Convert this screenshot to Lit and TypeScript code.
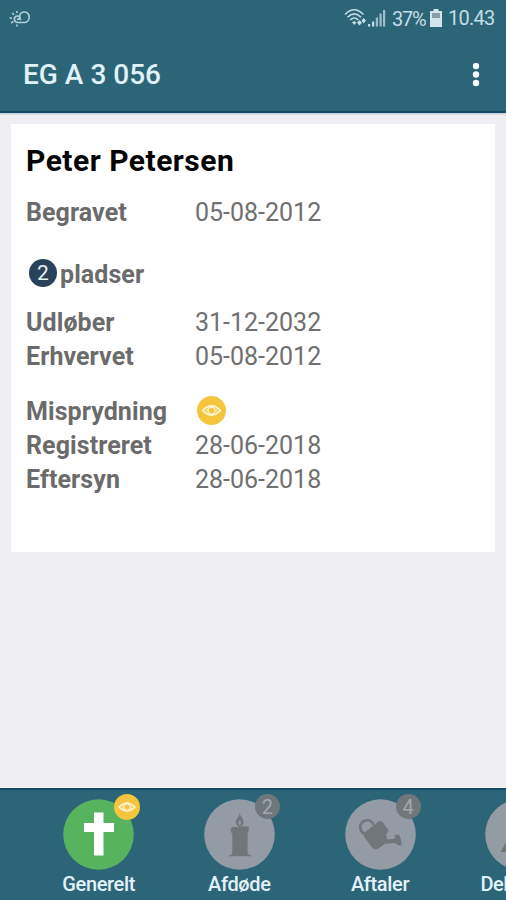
import { LitElement, html, css, svg, nothing } from "lit";
import { customElement, property } from "lit/decorators.js";

const eye = html`<svg class="eye" viewBox="0 0 28 28">
  <circle cx="14" cy="14" r="14" fill="#f5c63d" />
  <path d="M5.400 14Q14 5 22.600 14Q14 23 5.400 14Z" fill="none" stroke="#fff8df" stroke-width="1.500" />
  <circle cx="14" cy="14" r="3.400" fill="none" stroke="#fff8df" stroke-width="1.300" />
  <path d="M9.200 12.200Q7.800 14 9.200 15.800M18.800 12.200Q20.200 14 18.800 15.800" fill="none" stroke="#fff0bd" stroke-width="1" />
</svg>`;

const glyphs: Record<string, unknown> = {
  cross: svg`<path d="M31 13.500h9.500v10.500h10.500v9h-10.500v23.500h-9.500v-23.500h-10v-9h10z" fill="#fff"/>`,
  candle: svg`<path d="M35.600 14.200C36.500 17.500 39.500 19.500 39.500 23.200C39.500 25.400 38.300 27 36.600 27.500V29H35V27.500C33.200 27 31.800 25.300 31.800 23C31.800 19.500 35.400 18 35.600 14.200Z" fill="#6f777b"/>
    <path d="M35.700 20.500C37.600 23.400 36.900 26 35.700 26.600C34.300 25.700 34.200 23 35.700 20.500Z" fill="#939ba5"/>
    <path d="M27.300 28.600Q30.500 26.800 34.500 28.500Q39 26.600 44.500 27.800Q45.500 30.200 44.400 32.400L43.600 34.200V54.500Q44.500 55.800 48.200 57.300H24Q27.600 56 28.300 54.500V35Q25.800 32 27.300 28.600Z" fill="#6f777b"/>`,
  can: svg`<path d="M20 35.500C14 32 13.500 24 19.800 21.800C24 20.400 27.300 22.200 28.600 26" fill="none" stroke="#6f777b" stroke-width="2.700"/>
    <path d="M19.200 34L33.500 22.500Q36.500 21 38.500 24.500L43.700 31.500L41.200 35L42.200 40.500L48.500 40L50.500 38L48.700 36.600L54 35.200Q56.800 40.500 56.500 46.800L53 46.300L50 43.900L40.400 44.800L31.500 50.500Q29 51 26.700 48L19.500 38.500Q18.300 36 19.200 34Z" fill="#6f777b"/>`,
  more: svg`<path d="M15.500 53L24 38H45V53Z" fill="#6f777b"/>`,
};

@customElement("nav-item")
class NavItem extends LitElement {
  @property() label = "";
  @property() icon = "";
  @property() badge = "";
  @property({ type: Boolean, reflect: true }) active = false;

  static styles = css`
    :host { position: relative; flex: none; width: 140.700px; display: flex; flex-direction: column; align-items: center; }
    .disc { width: 71px; height: 71px; display: block; }
    .label { font: 500 20px/24px Roboto, sans-serif; color: #e3f2f8; letter-spacing: -0.350px; margin-top: 1.500px; white-space: nowrap; }
    :host(:last-child) .label { letter-spacing: -0.500px; margin-right: 9px; }
    .badge { position: absolute; left: 86px; top: -5px; width: 25px; height: 25px; border-radius: 50%; background: #6f777b; color: #a0a9b2; font: 20px/27px Roboto, sans-serif; text-align: center; }
    .alert { position: absolute; left: 86px; top: -5.500px; width: 26px; height: 26px; }
    .eye { display: block; width: 100%; height: 100%; }
  `;

  render() {
    return html`<svg class="disc" viewBox="0 0 71 71">
        <circle cx="35.500" cy="35.500" r="35.300" fill=${this.active ? "#57b35e" : "#939ba5"} />
        ${glyphs[this.icon]}
      </svg>
      <span class="label">${this.label}</span>
      ${this.active ? html`<div class="alert">${eye}</div>` : this.badge ? html`<div class="badge">${this.badge}</div>` : nothing}`;
  }
}

@customElement("app-root")
class AppRoot extends LitElement {
  static styles = css`
    :host { display: flex; flex-direction: column; width: 506px; height: 900px; overflow: hidden; background: #eeeef3; font-family: Roboto, sans-serif; box-sizing: border-box; }
    header { flex: none; height: 113px; box-sizing: border-box; background: #2d6578; border-bottom: 2px solid #104d67; box-shadow: 0 1px 2px #b9bec7; }
    .status { height: 36px; display: flex; align-items: center; justify-content: space-between; padding: 0 11px 0 9px; color: #c3dce5; }
    .right { display: flex; align-items: center; font-size: 20px; line-height: 38px; }
    .right svg, .weather { display: block; flex: none; }
    .signal { margin-left: 1px; }
    .pct { margin-left: 6px; width: 33px; font-size: 20px; letter-spacing: -1.300px; padding-top: 1px; white-space: nowrap; }
    .batt { margin-left: 5px; }
    .time { margin-left: 6px; width: 47px; letter-spacing: -0.750px; white-space: nowrap; }
    .bar { height: 76px; display: flex; align-items: center; justify-content: space-between; padding: 1px 25px 0 23px; }
    .title { font-size: 28px; font-weight: 500; line-height: 34px; color: #e0f1f8; }
    .menu { width: 10px; height: 24px; }
    .card { flex: none; box-sizing: border-box; margin: 11px 11px 0; height: 428px; background: #fff; padding: 17px 15px; color: #6b6b6b; }
    .name { margin: 0; font-size: 30px; font-weight: 700; letter-spacing: 0.500px; line-height: 40px; color: #050505; white-space: nowrap; }
    .row { display: grid; grid-template-columns: 169px 1fr; align-items: center; height: 34px; font-size: 25px; line-height: 34px; }
    .row span { padding-top: 1px; color: #707070; }
    .row b, .places b { font-weight: 700; font-size: 25px; letter-spacing: 0.080px; padding-top: 1px; }
    .first { margin-top: 14px; }
    .places { display: flex; align-items: center; height: 34px; margin: 28px 0 14px 3px; gap: 3px; }
    .count { width: 28px; height: 28px; border-radius: 50%; background: #27425a; color: #e8eff5; font-size: 21px; line-height: 29px; text-align: center; margin-top: -3px; }
    .gap { margin-top: 21px; }
    .flag { width: 29px; height: 29px; margin: -3px 0 0 2px; }
    .eye { display: block; width: 100%; height: 100%; }
    nav { flex: none; margin-top: auto; height: 112px; box-sizing: border-box; background: #2d6578; border-top: 2px solid #104d67; box-shadow: 0 -1px 1px #fff; display: flex; padding: 9px 0 0 28.300px; overflow: hidden; }
  `;

  row(label: string, value: unknown, extra = "") {
    return html`<div class="row ${extra}"><b>${label}</b><span>${value}</span></div>`;
  }

  render() {
    return html`
      <header>
        <div class="status">
          <svg class="weather" width="22" height="20" viewBox="0 0 22 20" fill="none" stroke="#b5d1dc" stroke-width="1.600">
            <path d="M8 14.500C4.500 13.500 4.500 8.500 8 8C10 7.800 11 9 11.300 10.200M8 14.500H15.500C21.500 14.500 22 4 15.500 4C12.500 4 10.500 5.800 10.800 8.500M8 11.500Q10.500 10 12 12" />
            <path d="M8 3V5M3.300 5L5 6.700M.500 10H3M2.200 15L4.400 13.300M8 16.500V18.500" />
          </svg>
          <div class="right">
            <svg width="23" height="20" viewBox="0 0 23 20" fill="none" stroke="#c3dce5" stroke-width="1.600">
              <path d="M1 6.500Q10 -3 19.500 6.500M3.500 9.300Q10.200 2.500 17 9.300M6.200 12Q10.200 8 14.200 12" />
              <path d="M8 14.300Q10.200 12.300 12.400 14.300L10.200 17Z" fill="#c3dce5" stroke="none" />
              <path d="M13 14.700L15.500 12L18 14.700L15.500 17.500ZM17.500 12.500L19.700 10L22 12.500L19.700 15.500Z" fill="#c3dce5" stroke="none" />
            </svg>
            <svg class="signal" width="18" height="19" viewBox="0 0 18 19" fill="#c3dce5">
              <path d="M0 15h2.200v2.500H0zM4 12.500h2.200v5H4z" />
              <path d="M7.800 8.500H10v9H7.800zM11.500 4.500h2.200v13h-2.200zM15 1h2.200v16.500H15z" opacity=".75" />
            </svg>
            <span class="pct">37%</span>
            <svg class="batt" width="12" height="18" viewBox="0 0 12 18">
              <path d="M3.500 0h5v2H12v16H0V2h3.500z" fill="#d2e5ec" />
              <path d="M2 4h8v5H2z" fill="#829faa" />
            </svg>
            <span class="time">10.43</span>
          </div>
        </div>
        <div class="bar">
          <span class="title">EG A 3 056</span>
          <svg class="menu" viewBox="0 0 10 24" fill="#f5fbfd">
            <circle cx="5" cy="3" r="3.200" /><circle cx="5" cy="11.500" r="3.200" /><circle cx="5" cy="20" r="3.200" />
          </svg>
        </div>
      </header>
      <section class="card">
        <h1 class="name">Peter Petersen</h1>
        ${this.row("Begravet", "05-08-2012", "first")}
        <div class="places"><span class="count">2</span><b>pladser</b></div>
        ${this.row("Udløber", "31-12-2032")}
        ${this.row("Erhvervet", "05-08-2012")}
        ${this.row("Misprydning", html`<div class="flag">${eye}</div>`, "gap")}
        ${this.row("Registreret", "28-06-2018")}
        ${this.row("Eftersyn", "28-06-2018")}
      </section>
      <nav>
        <nav-item label="Generelt" icon="cross" active></nav-item>
        <nav-item label="Afdøde" icon="candle" badge="2"></nav-item>
        <nav-item label="Aftaler" icon="can" badge="4"></nav-item>
        <nav-item label="Deltager" icon="more"></nav-item>
      </nav>`;
  }
}
